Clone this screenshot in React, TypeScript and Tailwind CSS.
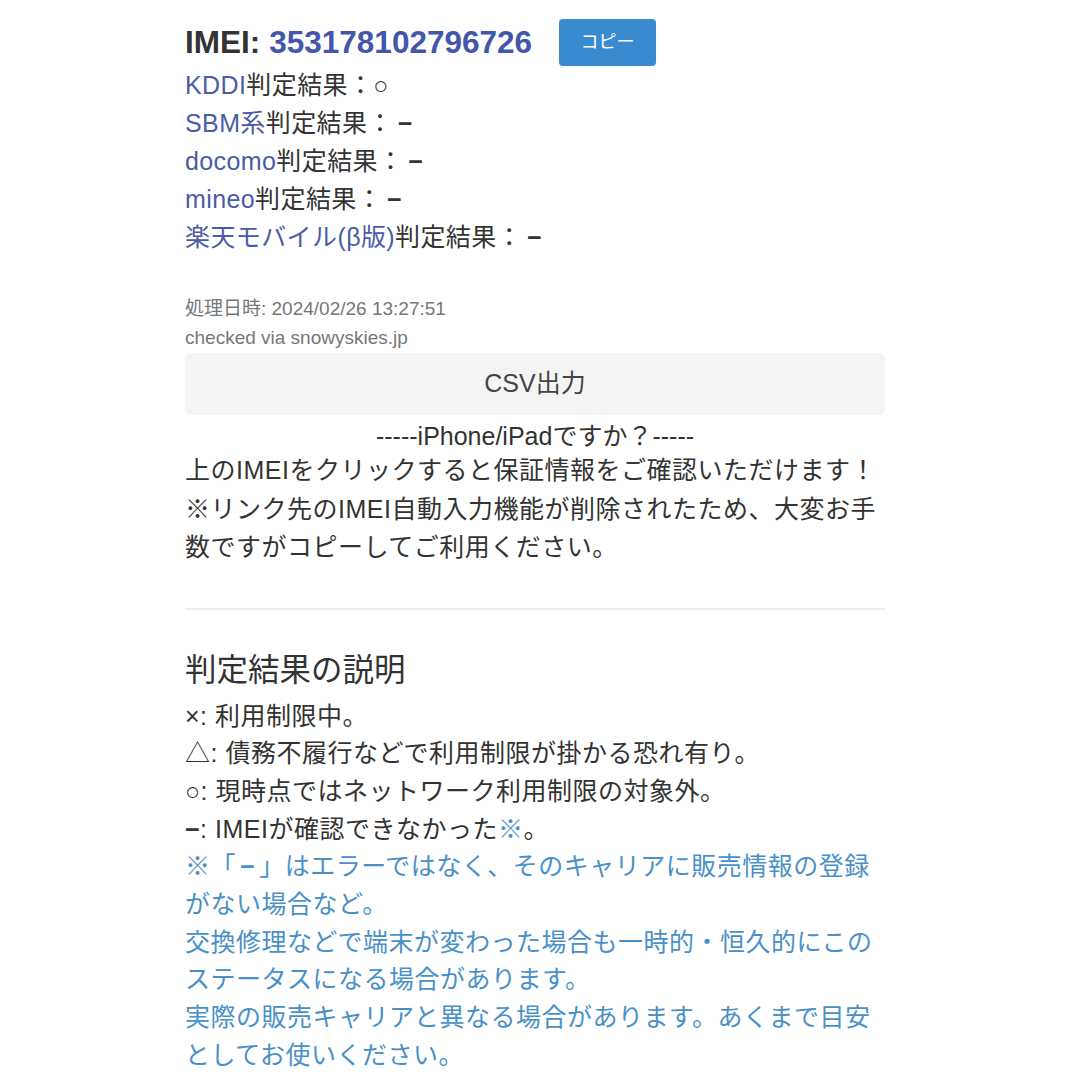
import React from 'react';

const carriers = [
  { name: 'KDDI', result: '○', dash: false },
  { name: 'SBM系', result: '−', dash: true },
  { name: 'docomo', result: '−', dash: true },
  { name: 'mineo', result: '−', dash: true },
  { name: '楽天モバイル(β版)', result: '−', dash: true },
];

const legend = [
  { mark: '×', text: '利用制限中。' },
  { mark: '△', text: '債務不履行などで利用制限が掛かる恐れ有り。' },
  { mark: '○', text: '現時点ではネットワーク利用制限の対象外。' },
];

const notes = [
  '交換修理などで端末が変わった場合も一時的・恒久的にこのステータスになる場合があります。',
  '実際の販売キャリアと異なる場合があります。あくまで目安としてお使いください。',
];

function Dash() {
  return <span className="font-bold">−</span>;
}

export default function App() {
  return (
    <div
      className="w-[1080px] h-[1080px] overflow-hidden bg-white text-[#333]"
      style={{ fontFamily: '"Liberation Sans", "Noto Sans CJK JP", sans-serif' }}
    >
      <div className="ml-[185px] w-[700px] pt-[19px]">
        {/* IMEI header */}
        <div className="flex items-center h-[47px]">
          <span className="text-[31.5px] font-bold text-[#333] leading-none">IMEI:</span>
          <span className="ml-[9px] text-[31.5px] font-bold text-[#4356aa] leading-none">353178102796726</span>
          <button className="ml-[27px] w-[97px] h-[47px] rounded-[4px] bg-[#3a8ad0] text-white text-[18px]">
            コピー
          </button>
        </div>

        {/* carrier results */}
        <div className="text-[25px] leading-[38px] tracking-[0.4px]">
          {carriers.map((c) => (
            <div key={c.name}>
              <span className="text-[#4a5ca8]">{c.name}</span>
              <span>判定結果：</span>
              {c.dash ? (
                <span className="ml-[5px]">
                  <Dash />
                </span>
              ) : (
                <span>{c.result}</span>
              )}
            </div>
          ))}
        </div>

        <div className="mt-[37.5px] text-[19px] leading-[29px] text-[#777]">
          <div>処理日時: 2024/02/26 13:27:51</div>
          <div>checked via snowyskies.jp</div>
        </div>

        <button className="mt-[1.5px] w-full h-[62px] rounded-[6px] bg-[#f4f4f4] text-[25px] text-[#444]">
          CSV出力
        </button>

        <div className="mt-[6px] text-center text-[25px] leading-[30px]">-----iPhone/iPadですか？-----</div>

        <p className="text-[25px] leading-[38.5px] tracking-[0.5px]">
          上のIMEIをクリックすると保証情報をご確認いただけます！
          <br />
          ※リンク先のIMEI自動入力機能が削除されたため、大変お手数ですがコピーしてご利用ください。
        </p>

        <hr className="mt-[41px] border-0 h-[2px] bg-[#eeeeee]" />

        <h2 className="mt-[38px] text-[31.5px] leading-[45px] text-[#333]">判定結果の説明</h2>

        <div className="mt-[5px] text-[25px] leading-[37.7px] tracking-[0.5px]">
          {legend.map((l) => (
            <div key={l.mark}>
              {l.mark}: {l.text}
            </div>
          ))}
          <div>
            <Dash />: IMEIが確認できなかった<span className="text-[#4a90c8]">※</span>。
          </div>
          <div className="text-[#4a90c8]">
            <div>
              ※「<span className="mx-[4px]"><Dash /></span>」はエラーではなく、そのキャリアに販売情報の登録がない場合など。
            </div>
            {notes.map((n) => (
              <div key={n}>{n}</div>
            ))}
          </div>
        </div>
      </div>
    </div>
  );
}
